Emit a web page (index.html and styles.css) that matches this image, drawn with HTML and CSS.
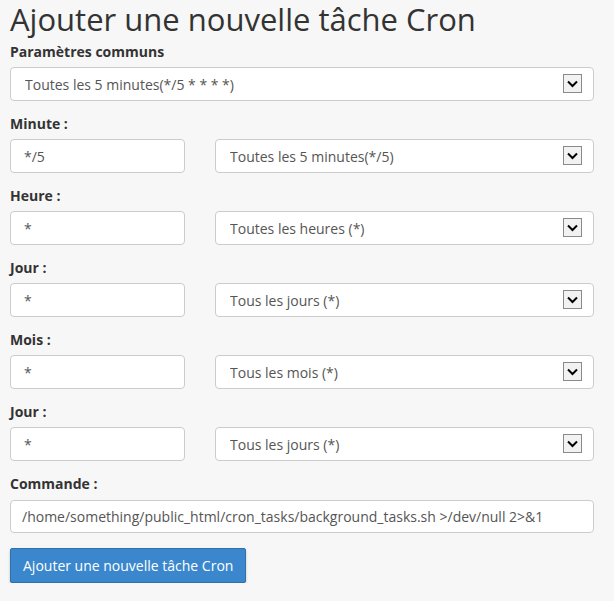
FILE: index.html
```html
<!doctype html>
<html lang="fr">
<head>
	<meta charset="UTF-8">
	<title>Ajouter une nouvelle tâche Cron</title>
	<link rel="stylesheet" href="styles.css">
</head>
<body>
	<div class="cron">
		<h2>Ajouter une nouvelle tâche Cron</h2>
		<form action="" method="get">
			<div class="group">
				<label>Paramètres communs</label>
				<div class="sel">
					<select><option>Toutes les 5 minutes(*/5 * * * *)</option></select>
					<svg class="arrow" width="19" height="19" viewBox="0 0 19 19"><rect x="0.5" y="0.5" width="18" height="18" fill="#f2f2f2" stroke="#8a8a8a"/><path d="M5 7.5 L9.5 12 L14 7.5" fill="none" stroke="#000" stroke-width="2"/></svg>
				</div>
			</div>

			<div class="group">
				<label>Minute :</label>
				<div class="row">
					<input type="text" value="*/5">
					<div class="sel">
						<select><option>Toutes les 5 minutes(*/5)</option></select>
						<svg class="arrow" width="19" height="19" viewBox="0 0 19 19"><rect x="0.5" y="0.5" width="18" height="18" fill="#f2f2f2" stroke="#8a8a8a"/><path d="M5 7.5 L9.5 12 L14 7.5" fill="none" stroke="#000" stroke-width="2"/></svg>
					</div>
				</div>
			</div>

			<div class="group">
				<label>Heure :</label>
				<div class="row">
					<input type="text" value="*">
					<div class="sel">
						<select><option>Toutes les heures (*)</option></select>
						<svg class="arrow" width="19" height="19" viewBox="0 0 19 19"><rect x="0.5" y="0.5" width="18" height="18" fill="#f2f2f2" stroke="#8a8a8a"/><path d="M5 7.5 L9.5 12 L14 7.5" fill="none" stroke="#000" stroke-width="2"/></svg>
					</div>
				</div>
			</div>

			<div class="group">
				<label>Jour :</label>
				<div class="row">
					<input type="text" value="*">
					<div class="sel">
						<select><option>Tous les jours (*)</option></select>
						<svg class="arrow" width="19" height="19" viewBox="0 0 19 19"><rect x="0.5" y="0.5" width="18" height="18" fill="#f2f2f2" stroke="#8a8a8a"/><path d="M5 7.5 L9.5 12 L14 7.5" fill="none" stroke="#000" stroke-width="2"/></svg>
					</div>
				</div>
			</div>

			<div class="group">
				<label>Mois :</label>
				<div class="row">
					<input type="text" value="*">
					<div class="sel">
						<select><option>Tous les mois (*)</option></select>
						<svg class="arrow" width="19" height="19" viewBox="0 0 19 19"><rect x="0.5" y="0.5" width="18" height="18" fill="#f2f2f2" stroke="#8a8a8a"/><path d="M5 7.5 L9.5 12 L14 7.5" fill="none" stroke="#000" stroke-width="2"/></svg>
					</div>
				</div>
			</div>

			<div class="group">
				<label>Jour :</label>
				<div class="row">
					<input type="text" value="*">
					<div class="sel">
						<select><option>Tous les jours (*)</option></select>
						<svg class="arrow" width="19" height="19" viewBox="0 0 19 19"><rect x="0.5" y="0.5" width="18" height="18" fill="#f2f2f2" stroke="#8a8a8a"/><path d="M5 7.5 L9.5 12 L14 7.5" fill="none" stroke="#000" stroke-width="2"/></svg>
					</div>
				</div>
			</div>

			<div class="group">
				<label>Commande :</label>
				<input type="text" class="cmd" value="/home/something/public_html/cron_tasks/background_tasks.sh >/dev/null 2>&amp;1">
			</div>

			<button type="button" class="btn">Ajouter une nouvelle tâche Cron</button>
		</form>
	</div>
</body>
</html>
```

FILE: styles.css
```css
body{margin:0; background:#f7f7f7; font-family:"Open Sans","Liberation Sans",sans-serif; font-size:14px; color:#333;}
.cron{width:584px; padding:0 10px;}
h2{font-size:31px; font-weight:normal; margin:0; padding-top:1px; line-height:37px; color:#333;}
.group{margin-top:4px; margin-bottom:13px;}
.group label{display:block; font-weight:bold; line-height:20px; margin-bottom:5px;}
.row{display:grid; grid-template-columns:175px 1fr; column-gap:30px;}
input,select{font-family:inherit; font-size:14px; color:#555; box-sizing:border-box; height:34px; border:1px solid #ccc; border-radius:4px; background:#fff; width:100%;}
input{padding:0 13px;}
input.cmd{height:33px; padding:0 11px; margin-top:1px;}
.sel{position:relative;}
select{appearance:none; -webkit-appearance:none; padding:0 40px 0 14px;}
.arrow{position:absolute; right:12px; top:7px; pointer-events:none;}
.btn{font-family:inherit; font-size:14px; color:#fff; background:#3a87cd; border:1px solid #2d70ad; border-radius:2px; height:35px; padding:0 12px; margin-top:2px; box-shadow:0 2px 3px rgba(0,0,0,0.2); cursor:pointer;}
```
